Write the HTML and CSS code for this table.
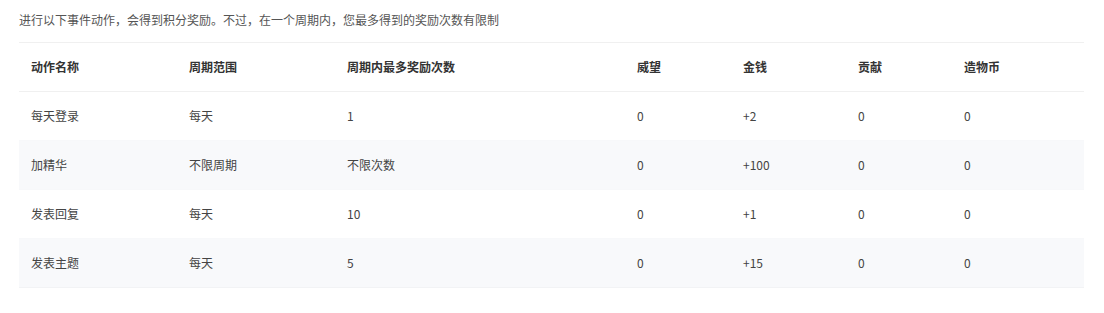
FILE: index.html
```html
<!DOCTYPE html>
<html lang="zh-CN">
<head>
<meta charset="utf-8">
<title>积分规则</title>
<link rel="stylesheet" href="styles.css">
</head>
<body>
<div class="page">
  <p class="intro">进行以下事件动作，会得到积分奖励。不过，在一个周期内，您最多得到的奖励次数有限制</p>
  <table class="rules">
    <colgroup>
      <col class="c1"><col class="c2"><col class="c3"><col class="c4"><col class="c5"><col class="c6"><col class="c7">
    </colgroup>
    <thead>
      <tr><th>动作名称</th><th>周期范围</th><th>周期内最多奖励次数</th><th>威望</th><th>金钱</th><th>贡献</th><th>造物币</th></tr>
    </thead>
    <tbody>
      <tr><td>每天登录</td><td>每天</td><td>1</td><td>0</td><td>+2</td><td>0</td><td>0</td></tr>
      <tr><td>加精华</td><td>不限周期</td><td>不限次数</td><td>0</td><td>+100</td><td>0</td><td>0</td></tr>
      <tr><td>发表回复</td><td>每天</td><td>10</td><td>0</td><td>+1</td><td>0</td><td>0</td></tr>
      <tr><td>发表主题</td><td>每天</td><td>5</td><td>0</td><td>+15</td><td>0</td><td>0</td></tr>
    </tbody>
  </table>
</div>
</body>
</html>
```

FILE: styles.css
```css
html, body {
  margin: 0;
  padding: 0;
  background: #fff;
}
body {
  font-family: "Noto Sans CJK SC", "Noto Sans", sans-serif;
  font-size: 12px;
  color: #444;
}
.page {
  padding: 11px 20px 0 19px;
}
.intro {
  margin: 0;
  line-height: 18px;
  color: #555;
}
.rules {
  margin-top: 13px;
  width: 1065px;
  border-collapse: collapse;
  table-layout: fixed;
  border-top: 1px solid #f0f0f0;
}
.c1 { width: 158px; }
.c2 { width: 158px; }
.c3 { width: 290px; }
.c4 { width: 106px; }
.c5 { width: 115px; }
.c6 { width: 106px; }
.c7 { width: 132px; }
.rules th,
.rules td {
  height: 48px;
  padding: 0 12px;
  text-align: left;
  line-height: 18px;
  vertical-align: middle;
}
.rules th {
  font-weight: bold;
  color: #333;
  border-bottom: 1px solid #f0f0f0;
}
.rules td {
  color: #444;
  border-bottom: 1px solid #f7f8fa;
}
.rules tbody tr:nth-child(even) td {
  background: #f8f9fb;
}
.rules tbody tr:last-child td {
  border-bottom-color: #f2f3f5;
}
```
